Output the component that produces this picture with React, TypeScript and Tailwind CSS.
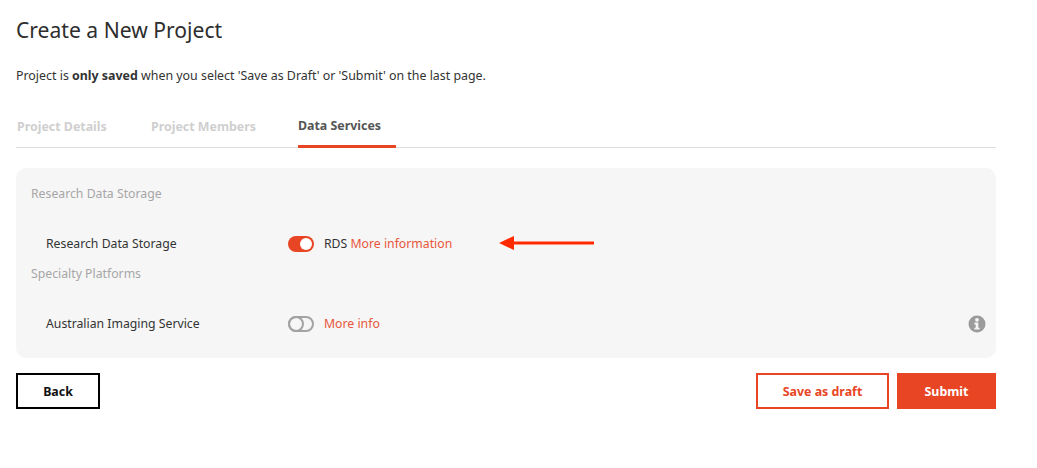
const font = "font-['Noto_Sans',sans-serif]";

function Toggle({ on }: { on: boolean }) {
    return on ? (
        <span className="flex h-[16px] w-[26px] items-center justify-end rounded-full bg-[#e84524] pr-[2px]">
            <span className="h-[12px] w-[12px] rounded-full bg-white"></span>
        </span>
    ) : (
        <span className="flex h-[16px] w-[26px] items-center rounded-full border-2 border-[#a3a3a3]">
            <span className="h-[16px] w-[16px] -ml-[2px] rounded-full border-2 border-[#a3a3a3]"></span>
        </span>
    );
}

export default function App() {
    return (
        <div className={`${font} h-[468px] w-[1037px] overflow-hidden bg-white pl-4 text-[#333333]`}>
            <div className="w-[980px]">
                <h1 className="pt-[15px] text-[21.1px] leading-[30px] font-normal text-[#2d2d2d]">Create a New Project</h1>
                <p className="mt-[21px] text-[12.4px] leading-[20px]">
                    Project is <b className="font-bold">only saved</b> when you select 'Save as Draft' or 'Submit' on the last page.
                </p>

                {/* Tabs */}
                <div className="mt-[20px] flex h-[42px] border-b border-[#dddddd] text-[12.4px] font-bold">
                    <div className="w-[135px] pt-[12px] pl-px text-[#cfcfcf]">Project Details</div>
                    <div className="w-[147px] pt-[12px] text-[#cfcfcf]">Project Members</div>
                    <div className="h-[42px] w-[98px] border-b-[3px] border-[#e84524] pt-[11px] text-[#555555]">Data Services</div>
                </div>

                {/* Panel */}
                <div className="relative mt-[20px] h-[190px] rounded-[10px] bg-[#f6f6f6] px-[15px] pt-[16px] text-[12.25px] leading-[20px]">
                    <div className="text-[#a6a6a6]">Research Data Storage</div>
                    <div className="mt-[30px] flex items-center pl-[15px]">
                        <div className="w-[242px]">Research Data Storage</div>
                        <Toggle on />
                        <div className="ml-[10px]">
                            RDS <span className="text-[#e8553a]">More information</span>
                        </div>
                    </div>
                    <div className="mt-[10px] text-[#a6a6a6]">Specialty Platforms</div>
                    <div className="mt-[30px] flex items-center pl-[15px]">
                        <div className="w-[242px]">Australian Imaging Service</div>
                        <Toggle on={false} />
                        <div className="ml-[10px] text-[#e8553a]">More info</div>
                        <svg className="ml-auto -mr-[5px]" width="18" height="18" viewBox="0 0 18 18">
                            <circle cx="9" cy="9" r="8.5" fill="#9b9b9b" />
                            <circle cx="9" cy="4.8" r="1.9" fill="#f6f6f6" />
                            <path d="M6.4 7.5h3.9v5.2h1.3v1.9H6.4v-1.9h1.3V9.4H6.4z" fill="#f6f6f6" />
                        </svg>
                    </div>
                    {/* annotation arrow */}
                    <svg className="absolute left-[483px] top-[67px]" width="95" height="16" viewBox="0 0 95 16">
                        <path d="M0 8 15 1v5.5h80v3H15V15z" fill="#ff2a00" />
                    </svg>
                </div>

                {/* Buttons */}
                <div className="mt-[15px] flex text-[12.4px] font-bold">
                    <button className="h-[36px] w-[84px] border-2 border-black pt-[2px] text-[#111111]">Back</button>
                    <button className="ml-auto h-[36px] w-[133px] border-2 border-[#e84524] pt-[2px] text-[#e84524]">Save as draft</button>
                    <button className="ml-[8px] h-[36px] w-[99px] bg-[#e84524] pt-[2px] text-white">Submit</button>
                </div>
            </div>
        </div>
    );
}
